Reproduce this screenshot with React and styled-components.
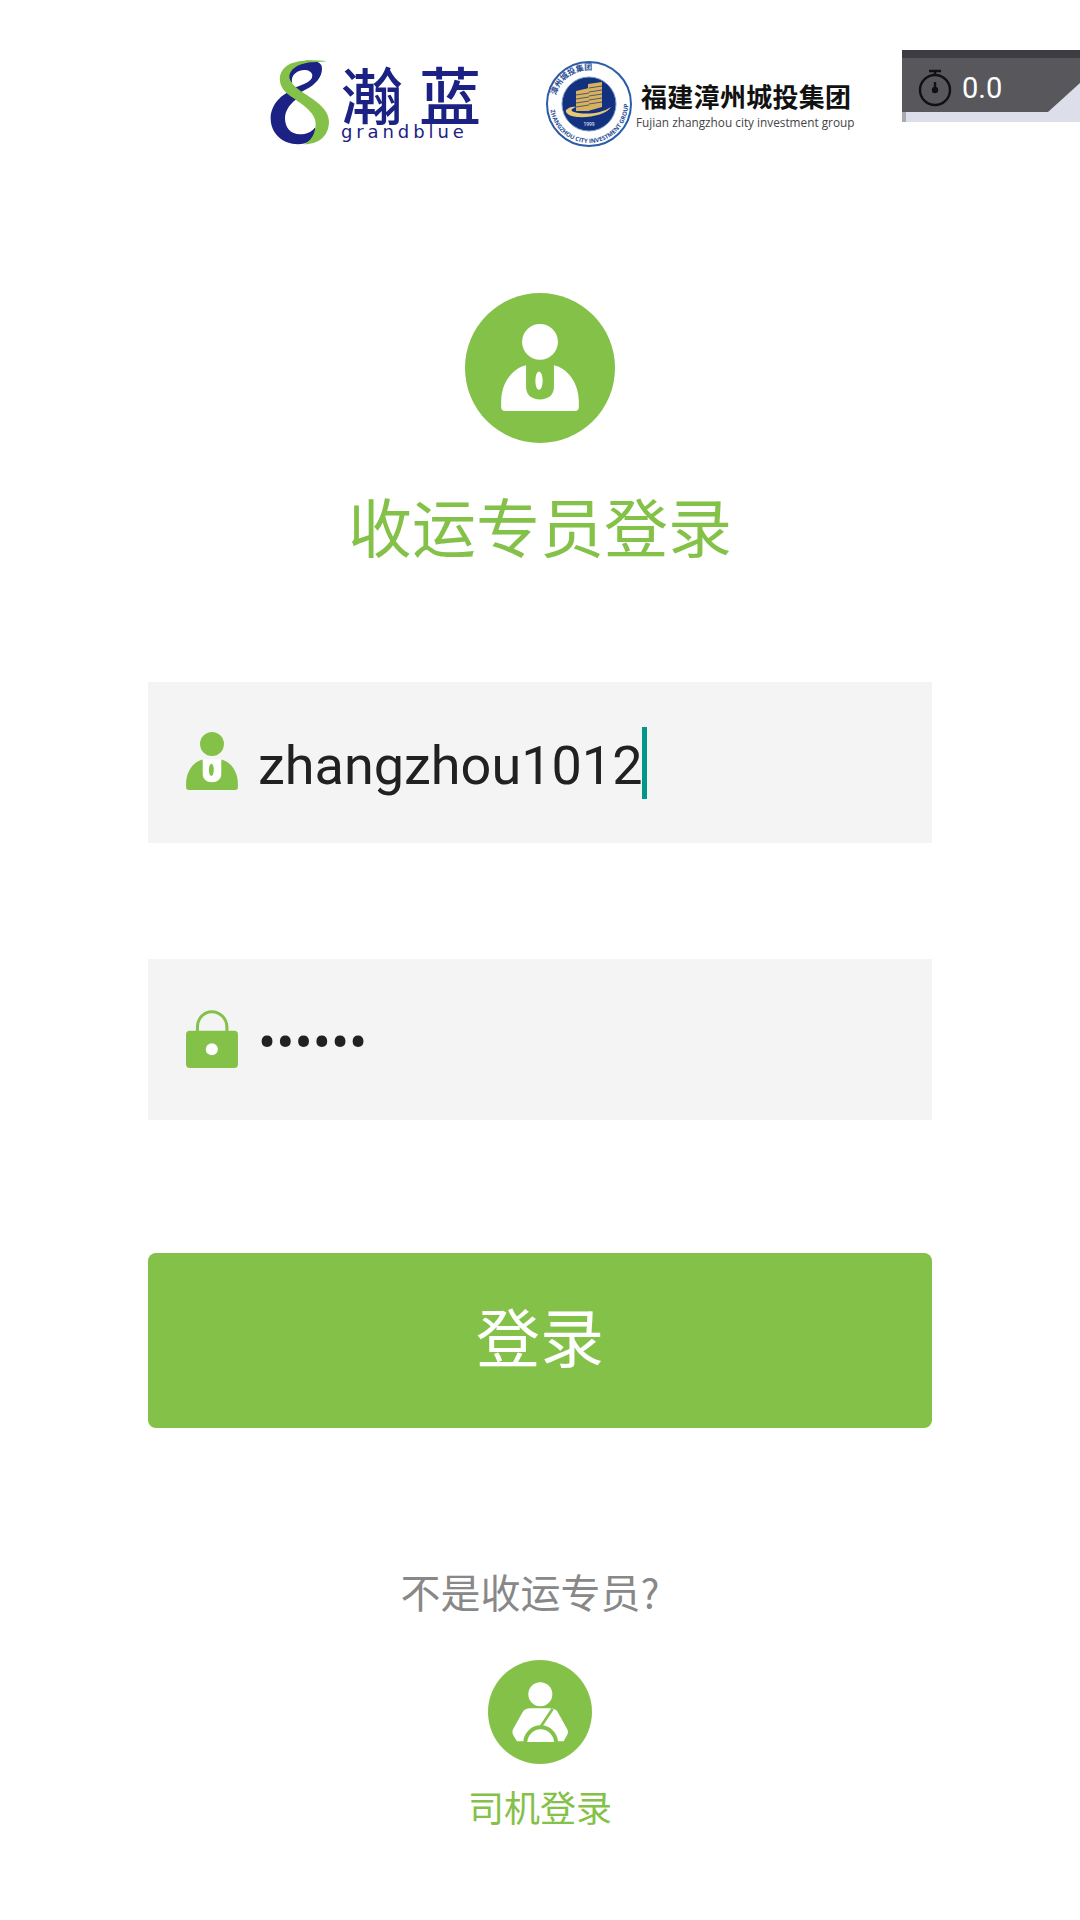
import styled, { createGlobalStyle } from "styled-components";

const green = "#84c148";
const navy = "#1c2283";
const cjk = `"Noto Sans CJK SC", "Noto Sans", sans-serif`;

const GlobalStyle = createGlobalStyle`
    html, body {
        margin: 0;
        padding: 0;
        background: #fff;
    }
    * {
        box-sizing: border-box;
    }
`;

const Page = styled.div`
    position: relative;
    width: 1080px;
    height: 1920px;
    overflow: hidden;
    background: #fff;
    display: flex;
    flex-direction: column;
    align-items: center;
    font-family: ${cjk};
`;

/* logos */
const Header = styled.div`
    align-self: stretch;
    display: flex;
    gap: 64px;
    height: 88px;
    margin-top: 60px;
    padding-left: 270px;
`;

const Brand = styled.div`
    display: flex;
    align-items: flex-start;
    gap: 11px;
    width: 211px;
`;

const BrandText = styled.div`
    display: flex;
    flex-direction: column;
    padding-top: 5px;
`;

const BrandName = styled.div`
    display: flex;
    gap: 16px;
    height: 57px;
    font-size: 62px;
    line-height: 57px;
    font-weight: 500;
    color: ${navy};
`;

const BrandLatin = styled.div`
    font-family: "DejaVu Sans", sans-serif;
    font-size: 18px;
    line-height: 20px;
    letter-spacing: 3.9px;
    color: ${navy};
`;

const Group = styled.div`
    display: flex;
    align-items: flex-start;
    gap: 3px;
`;

const GroupText = styled.div`
    display: flex;
    flex-direction: column;
    padding-top: 20px;
`;

const GroupName = styled.div`
    height: 34px;
    padding-left: 5px;
    font-size: 26px;
    line-height: 32px;
    letter-spacing: 0.3px;
    font-weight: 700;
    color: #111;
    white-space: nowrap;
`;

const GroupLatin = styled.div`
    font-family: "Open Sans", sans-serif;
    font-size: 11.8px;
    line-height: 16px;
    color: #444;
    white-space: nowrap;
`;

/* timer overlay in the corner */
const Timer = styled.div`
    position: absolute;
    top: 50px;
    right: 0;
    width: 178px;
    height: 72px;
    background: #dcdfe9;
    border-left: 4px solid #a9aab0;
`;

const TimerFace = styled.div`
    margin-left: -4px;
    width: 178px;
    height: 62px;
    display: flex;
    align-items: center;
    gap: 10px;
    padding: 14px 0 0 16px;
    background: linear-gradient(#3d3c42 8px, #58585c 8px);
    clip-path: polygon(0 0, 100% 0, 100% 33px, 146px 100%, 0 100%);
    color: #fff;
    font-family: Roboto, sans-serif;
    font-size: 29px;
`;

/* title */
const Avatar = styled.div`
    width: ${(p) => p.$size}px;
    height: ${(p) => p.$size}px;
    border-radius: 50%;
    background: ${green};
    display: flex;
    align-items: center;
    justify-content: center;
`;

const TopAvatar = styled(Avatar)`
    margin-top: 145px;
`;

const Title = styled.h1`
    margin: 36px 0 0;
    font-size: 64px;
    line-height: 90px;
    font-weight: 400;
    color: ${green};
`;

/* form */
const Form = styled.div`
    display: flex;
    flex-direction: column;
    width: 784px;
    margin-top: 113px;
`;

const Field = styled.div`
    display: flex;
    align-items: center;
    gap: 20px;
    height: 161px;
    margin-bottom: 116px;
    padding-left: 38px;
    background: #f4f4f4;
    font-family: Roboto, sans-serif;
    font-size: 54px;
    color: #212121;

    &:last-of-type {
        margin-bottom: 0;
    }
`;

const Caret = styled.span`
    display: inline-block;
    width: 5px;
    height: 72px;
    margin-left: -1px;
    background: #009688;
`;

const Value = styled.span`
    display: flex;
    align-items: center;
    white-space: nowrap;
`;

const ValueText = styled.span`
    padding-top: 5px;
`;

const LoginButton = styled.button`
    height: 175px;
    margin-top: 133px;
    padding: 0 0 14px;
    border: 0;
    border-radius: 8px;
    background: ${green};
    color: #fff;
    font-family: ${cjk};
    font-size: 64px;
`;

/* switch to driver login */
const Question = styled.div`
    margin-top: 138px;
    padding-right: 20px;
    font-size: 40px;
    line-height: 50px;
    color: #888;
`;

const DriverAvatar = styled(Avatar)`
    margin-top: 44px;
    margin-right: 1px;
`;

const DriverLabel = styled.div`
    margin-top: 17px;
    font-size: 36px;
    line-height: 50px;
    color: ${green};
`;

const IconSvg = styled.svg`
    margin-bottom: ${(p) => p.$lift}px;
`;

const EightLogo = () => (
    <svg width="60" height="85" viewBox="88 95 180 255">
        <path
            fill={navy}
            d="M165 182 C120 195 90 232 90 270 C90 315 125 348 172 348 C198 348 218 335 228 305 L222 298 C212 312 195 318 178 318 C150 318 133 298 133 270 C133 245 150 222 178 205 Z"
        />
        <path
            fill={navy}
            d="M145 125 C160 103 185 97 205 97 C225 97 240 103 243 112 C248 135 235 160 205 178 L172 196 L160 178 C185 170 215 160 215 142 C215 128 195 122 178 127 C160 132 150 148 155 165 L140 150 Z"
        />
        <path
            fill={green}
            d="M258 98 C205 93 150 95 128 122 C108 148 118 180 145 200 C175 222 225 250 225 285 C225 315 212 338 190 348 C240 347 265 318 265 280 C265 238 215 212 180 188 C158 172 140 155 148 135 C155 118 175 108 200 103 C225 100 245 102 258 98 Z"
        />
    </svg>
);

const Emblem = () => (
    <svg width="88" height="88" viewBox="0 0 88 88">
        <defs>
            <path id="ringTop" d="M10 44 A34 34 0 0 1 78 44" />
            <path id="ringBottom" d="M5 44 A39 39 0 0 0 83 44" />
        </defs>
        <circle cx="44" cy="44" r="42" fill="#fff" stroke="#2a5ca8" strokeWidth="2" />
        <circle cx="44" cy="44" r="27" fill="#12317f" stroke="#7d9ccb" strokeWidth="1" />
        <text fontSize="8" fontWeight="700" fill="#2a4d94" fontFamily={cjk}>
            <textPath href="#ringTop" startOffset="8%">漳州城投集团</textPath>
        </text>
        <text fontSize="6" fontWeight="700" fill="#2a4d94" fontFamily="Open Sans, sans-serif">
            <textPath href="#ringBottom" startOffset="5%">ZHANGZHOU CITY INVESTMENT GROUP</textPath>
        </text>
        <path fill="#d8b25c" d="M31 31 L44 28 V51 L31 51 Z M43 24 L57 22 V47 L43 51 Z" />
        <path fill="none" stroke="#2b3f80" strokeWidth="0.8" d="M31 35 L44 33 M31 39 L44 37 M31 43 L44 41 M31 47 L44 45 M44 28 L57 26 M44 32 L57 30 M44 36 L57 34 M44 40 L57 38 M44 44 L57 42" />
        <path fill="#e8c877" d="M21 50 C24 47 28 46 31 47 C26 49 25 51 29 52 C40 55 56 54 66 47 C62 54 46 58 32 57 C24 56 20 53 21 50 Z" />
        <text x="44" y="66" fontSize="5" fill="#fff" textAnchor="middle" fontFamily="Roboto, sans-serif">1999</text>
    </svg>
);

const Stopwatch = () => (
    <svg width="34" height="38" viewBox="0 0 34 38" fill="none" stroke="#111" strokeWidth="2.4">
        <circle cx="17" cy="21" r="15" />
        <path d="M11 2 H23 M17 2 V6 M17 21 V13" />
        <circle cx="17" cy="21" r="2" fill="#111" />
    </svg>
);

const PersonIcon = ({ width, height, fill, notch, tie, lift }) => (
    <IconSvg width={width} height={height} viewBox="183 131 234 262" $lift={lift}>
        <circle cx="300" cy="185" r="54" fill={fill} />
        <path
            fill={notch}
            d="M258 255 V320 C258 345 275 358 300 358 C325 358 342 345 342 320 V255 Z"
        />
        <path
            fill={fill}
            d="M258 255 V320 C258 345 275 358 300 358 C325 358 342 345 342 320 V255 C385 265 417 310 417 365 V381 Q417 393 405 393 H195 Q183 393 183 381 V365 C183 310 215 265 258 255 Z"
        />
        <ellipse cx="297" cy="302" rx="11" ry="28" fill={tie} />
    </IconSvg>
);

const LockIcon = () => (
    <IconSvg width="52" height="58" viewBox="138 180 155 173" $lift={2}>
        <path fill="none" stroke={green} strokeWidth="9" d="M172 246 V232 C172 204 192 185 215 185 C238 185 260 204 260 232 V246" />
        <rect x="138" y="242" width="155" height="111" rx="11" fill={green} />
        <circle cx="215" cy="297" r="18" fill="#fff" />
    </IconSvg>
);

const DriverIcon = () => (
    <svg width="56" height="60" viewBox="155 118 168 180">
        <circle cx="240" cy="155" r="36" fill="#fff" />
        <path
            fill="#fff"
            d="M210 197 H270 Q285 197 292 208 L320 258 Q326 268 320 278 L310 296 H170 L160 280 Q153 268 159 258 L187 208 Q194 197 210 197 Z"
        />
        <path d="M277 198 L240 254" stroke={green} strokeWidth="8" fill="none" />
        <path d="M195 300 A46 46 0 0 1 287 300" stroke={green} strokeWidth="12" fill="#fff" />
    </svg>
);

const App = () => {
    return (
        <Page>
            <GlobalStyle />
            <Header>
                <Brand>
                    <EightLogo />
                    <BrandText>
                        <BrandName>
                            <span>瀚</span>
                            <span>蓝</span>
                        </BrandName>
                        <BrandLatin>grandblue</BrandLatin>
                    </BrandText>
                </Brand>
                <Group>
                    <Emblem />
                    <GroupText>
                        <GroupName>福建漳州城投集团</GroupName>
                        <GroupLatin>Fujian zhangzhou city investment group</GroupLatin>
                    </GroupText>
                </Group>
            </Header>

            <Timer>
                <TimerFace>
                    <Stopwatch />
                    <span>0.0</span>
                </TimerFace>
            </Timer>

            <TopAvatar $size={150}>
                <PersonIcon width={78} height={87} fill="#fff" notch="none" tie="#fff" lift={2} />
            </TopAvatar>
            <Title>收运专员登录</Title>

            <Form>
                <Field>
                    <PersonIcon width={52} height={58} fill={green} notch="#fff" tie={green} lift={3} />
                    <Value>
                        <ValueText>zhangzhou1012</ValueText>
                        <Caret />
                    </Value>
                </Field>
                <Field>
                    <LockIcon />
                    <Value>
                        <ValueText>••••••</ValueText>
                    </Value>
                </Field>
                <LoginButton>登录</LoginButton>
            </Form>

            <Question>不是收运专员?</Question>
            <DriverAvatar $size={104}>
                <DriverIcon />
            </DriverAvatar>
            <DriverLabel>司机登录</DriverLabel>
        </Page>
    );
};

export default App;
